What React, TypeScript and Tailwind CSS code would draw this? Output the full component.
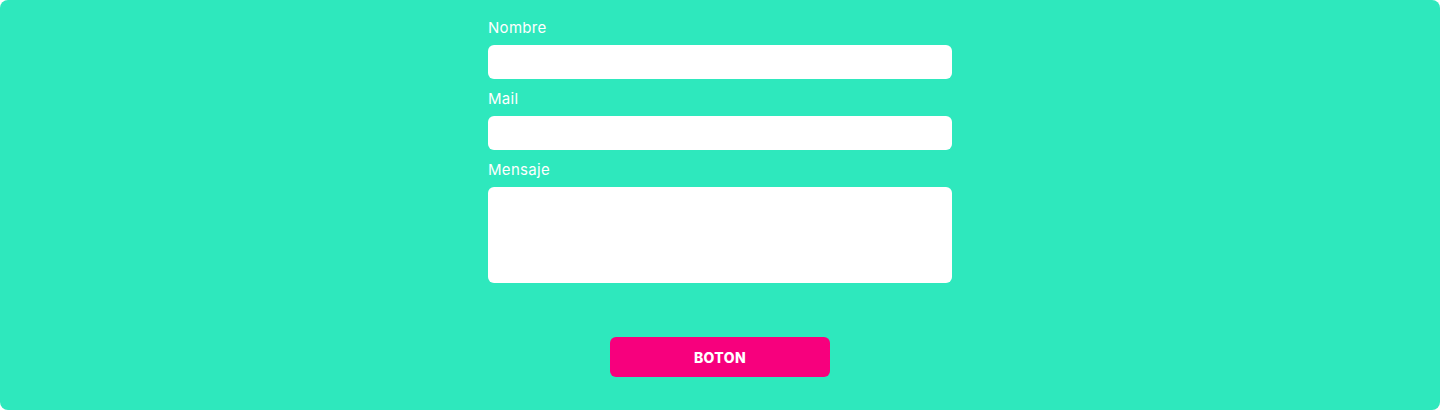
import React from "react";

export default function App() {
  const font = { fontFamily: 'Inter, "Open Sans", "Liberation Sans", sans-serif' };
  return (
    <div className="w-[1440px] h-[410px] bg-white" style={font}>
      <div className="w-full h-full rounded-lg bg-[#2ee8bd] flex flex-col items-center pt-4">
        <form className="w-[464px] flex flex-col">
          <label className="text-[15px] leading-[24px] text-white mb-[5px] tracking-[0.3px]">Nombre</label>
          <input className="h-[34px] rounded-md bg-white outline-none" />
          <label className="text-[15px] leading-[24px] text-white mb-[5px] mt-2 tracking-[0.3px]">Mail</label>
          <input className="h-[34px] rounded-md bg-white outline-none" />
          <label className="text-[15px] leading-[24px] text-white mb-[5px] mt-2 tracking-[0.3px]">Mensaje</label>
          <textarea className="h-[96px] rounded-md bg-white outline-none resize-none" />
        </form>
        <button className="mt-[54px] w-[220px] h-[40px] rounded-md bg-[#f7007d] text-white text-[14px] font-extrabold tracking-[0.4px]">
          BOTON
        </button>
      </div>
    </div>
  );
}
